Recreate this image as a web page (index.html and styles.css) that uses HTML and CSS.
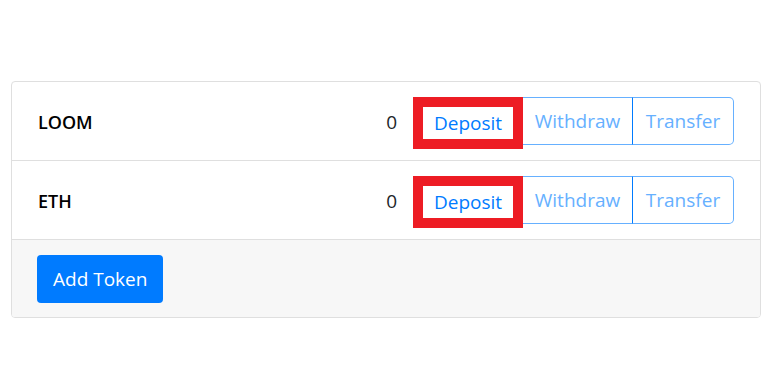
FILE: index.html
```html
<!DOCTYPE html>
<html lang="en">
<head>
    <meta charset="UTF-8">
    <title>Tokens</title>
    <link rel="stylesheet" href="styles.css">
</head>
<body>
    <div class="wrapper">
        <div class="card">
            <div class="token-row">
                <div class="token-name">LOOM</div>
                <div class="token-balance">0</div>
                <div class="btn-group">
                    <button class="btn btn-deposit">Deposit</button>
                    <button class="btn btn-outline" disabled>Withdraw</button>
                    <button class="btn btn-outline btn-last" disabled>Transfer</button>
                </div>
            </div>
            <div class="token-row">
                <div class="token-name">ETH</div>
                <div class="token-balance">0</div>
                <div class="btn-group">
                    <button class="btn btn-deposit">Deposit</button>
                    <button class="btn btn-outline" disabled>Withdraw</button>
                    <button class="btn btn-outline btn-last" disabled>Transfer</button>
                </div>
            </div>
            <div class="card-footer">
                <button class="btn btn-primary">Add Token</button>
            </div>
        </div>
    </div>
</body>
</html>
```

FILE: styles.css
```css
body {
    margin: 0;
    font-family: "Open Sans", "Noto Sans", sans-serif;
    color: #212529;
    background: #fff;
}

.wrapper {
    padding: 81px 13px 0 11px;
}

/* Carte qui contient la liste des jetons */
.card {
    border: 1px solid #dfdfdf;
    border-radius: 4px;
    overflow: hidden;
}

.token-row {
    display: flex;
    align-items: flex-start;
    height: 79px;
    padding: 15px 26px 0 26px;
    box-sizing: border-box;
    border-bottom: 1px solid #dfdfdf;
}

.token-name {
    flex: 1;
    font-size: 18px;
    font-weight: 600;
    color: #000;
    line-height: 50px;
}

.token-balance {
    font-size: 19px;
    line-height: 50px;
    margin-right: 16px;
}

/* Groupe de boutons */
.btn-group {
    display: flex;
    align-items: flex-start;
}

.btn {
    font-family: inherit;
    font-size: 19px;
    background: #fff;
    cursor: pointer;
    margin: 0;
}

.btn-deposit {
    width: 110px;
    height: 52px;
    border: 10px solid #ed1c24;
    padding: 0;
    color: #007bff;
}

.btn-outline {
    height: 48px;
    padding: 0;
    border: 1px solid #66b0ff;
    border-left-color: #007bff;
    color: #66b0ff;
    width: 110px;
}

.btn-deposit + .btn-outline {
    border-left: none;
}

.btn-last {
    width: 102px;
    margin-left: -1px;
    border-radius: 0 5px 5px 0;
}

/* Pied de carte */
.card-footer {
    background: #f7f7f7;
    height: 77px;
    padding: 15px 25px 0;
    box-sizing: border-box;
}

.btn-primary {
    height: 48px;
    padding: 0 16px;
    border: none;
    border-radius: 4px;
    background: #007bff;
    color: #fff;
}
```
